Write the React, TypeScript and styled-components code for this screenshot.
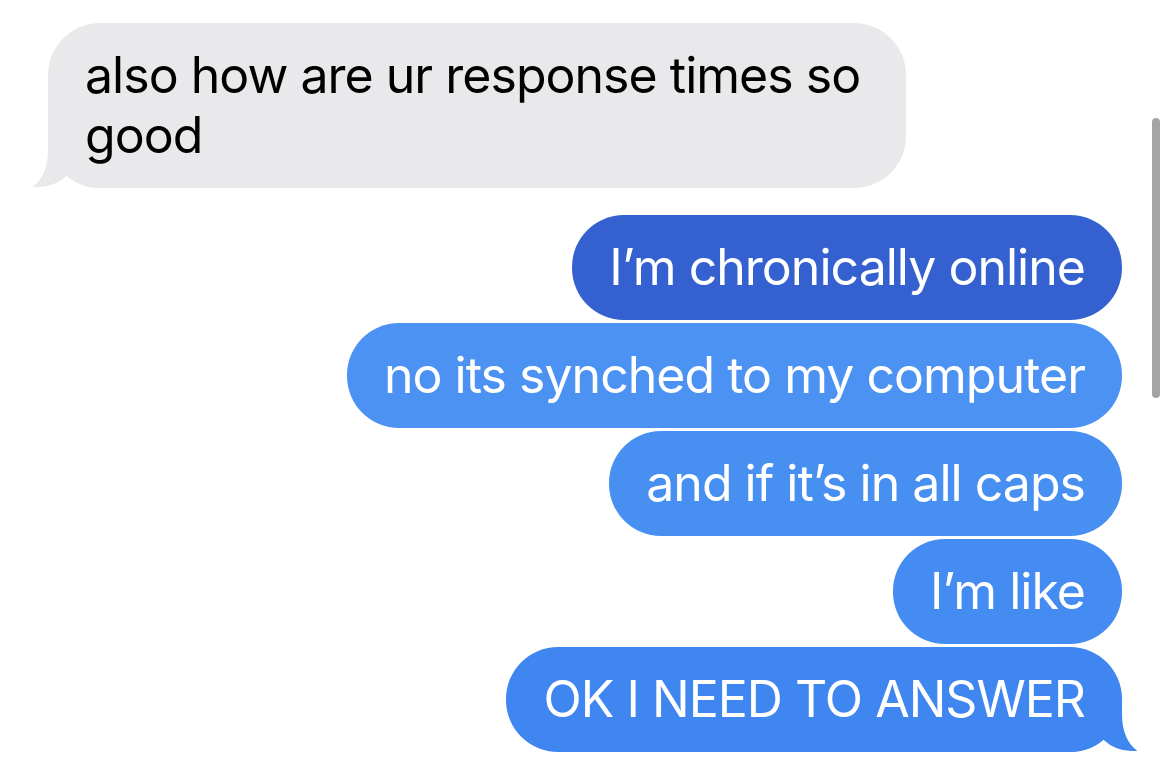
import React from "react";
import styled, { createGlobalStyle } from "styled-components";

const Global = createGlobalStyle`
  html, body { margin: 0; padding: 0; background: #ffffff; }
  body { width: 1170px; height: 764px; overflow: hidden; font-family: Inter, "Noto Sans", "Liberation Sans", sans-serif; }
`;

const Screen = styled.div`
  position: relative;
  width: 1170px;
  height: 764px;
  box-sizing: border-box;
  padding: 23px 48px 0 48px;
  display: flex;
  flex-direction: column;
  background: #ffffff;
`;

const Row = styled.div<{ $out?: boolean; $gap: number }>`
  display: flex;
  justify-content: ${(p) => (p.$out ? "flex-end" : "flex-start")};
  margin-top: ${(p) => p.$gap}px;
`;

const Bubble = styled.div<{ $bg: string; $fg: string }>`
  position: relative;
  max-width: 858px;
  box-sizing: border-box;
  padding: 22px 37px 23px 37px;
  border-radius: 52px;
  background: ${(p) => p.$bg};
  color: ${(p) => p.$fg};
  font-size: 50px;
  line-height: 60px;
  letter-spacing: -0.98px;
  font-weight: 400;
  white-space: normal;
`;

const Text = styled.span`
  position: relative;
  z-index: 1;
`;

const TailSvg = styled.svg<{ $side: "left" | "right" }>`
  position: absolute;
  bottom: 0;
  width: 70px;
  height: 50px;
  ${(p) => (p.$side === "left" ? "left: -16px;" : "right: -16px; transform: scaleX(-1);")}
`;

const Scrollbar = styled.div`
  position: absolute;
  left: 1152px;
  top: 118px;
  width: 8px;
  height: 280px;
  border-radius: 4px;
  background: #a4a4a4;
`;

const Tail = ({ side, color }: { side: "left" | "right"; color: string }) => (
  <TailSvg $side={side} viewBox="0 0 70 50">
    <path
      d="M16 0 L16 12 C16 30 10 42 0.7 48.7 Q20 51 34.7 37.7 Q48 50 70 50 L70 0 Z"
      fill={color}
    />
  </TailSvg>
);

type Msg = { text: string; out: boolean; bg: string; tail?: boolean; gap: number };

const messages: Msg[] = [
  { text: "also how are ur response times so good", out: false, bg: "#e9e9eb", tail: true, gap: 0 },
  { text: "I\u2019m chronically online", out: true, bg: "#3461cf", gap: 27 },
  { text: "no its synched to my computer", out: true, bg: "#4b92f2", gap: 3 },
  { text: "and if it\u2019s in all caps", out: true, bg: "#488ff2", gap: 3 },
  { text: "I\u2019m like", out: true, bg: "#448bf2", gap: 3 },
  { text: "OK I NEED TO ANSWER", out: true, bg: "#3f86f0", tail: true, gap: 3 },
];

export default function App() {
  return (
    <>
      <Global />
      <Screen>
        {messages.map((m, i) => (
          <Row key={i} $out={m.out} $gap={m.gap}>
            <Bubble $bg={m.bg} $fg={m.out ? "#ffffff" : "#000000"}>
              {m.tail && <Tail side={m.out ? "right" : "left"} color={m.bg} />}
              <Text>{m.text}</Text>
            </Bubble>
          </Row>
        ))}
        <Scrollbar />
      </Screen>
    </>
  );
}
